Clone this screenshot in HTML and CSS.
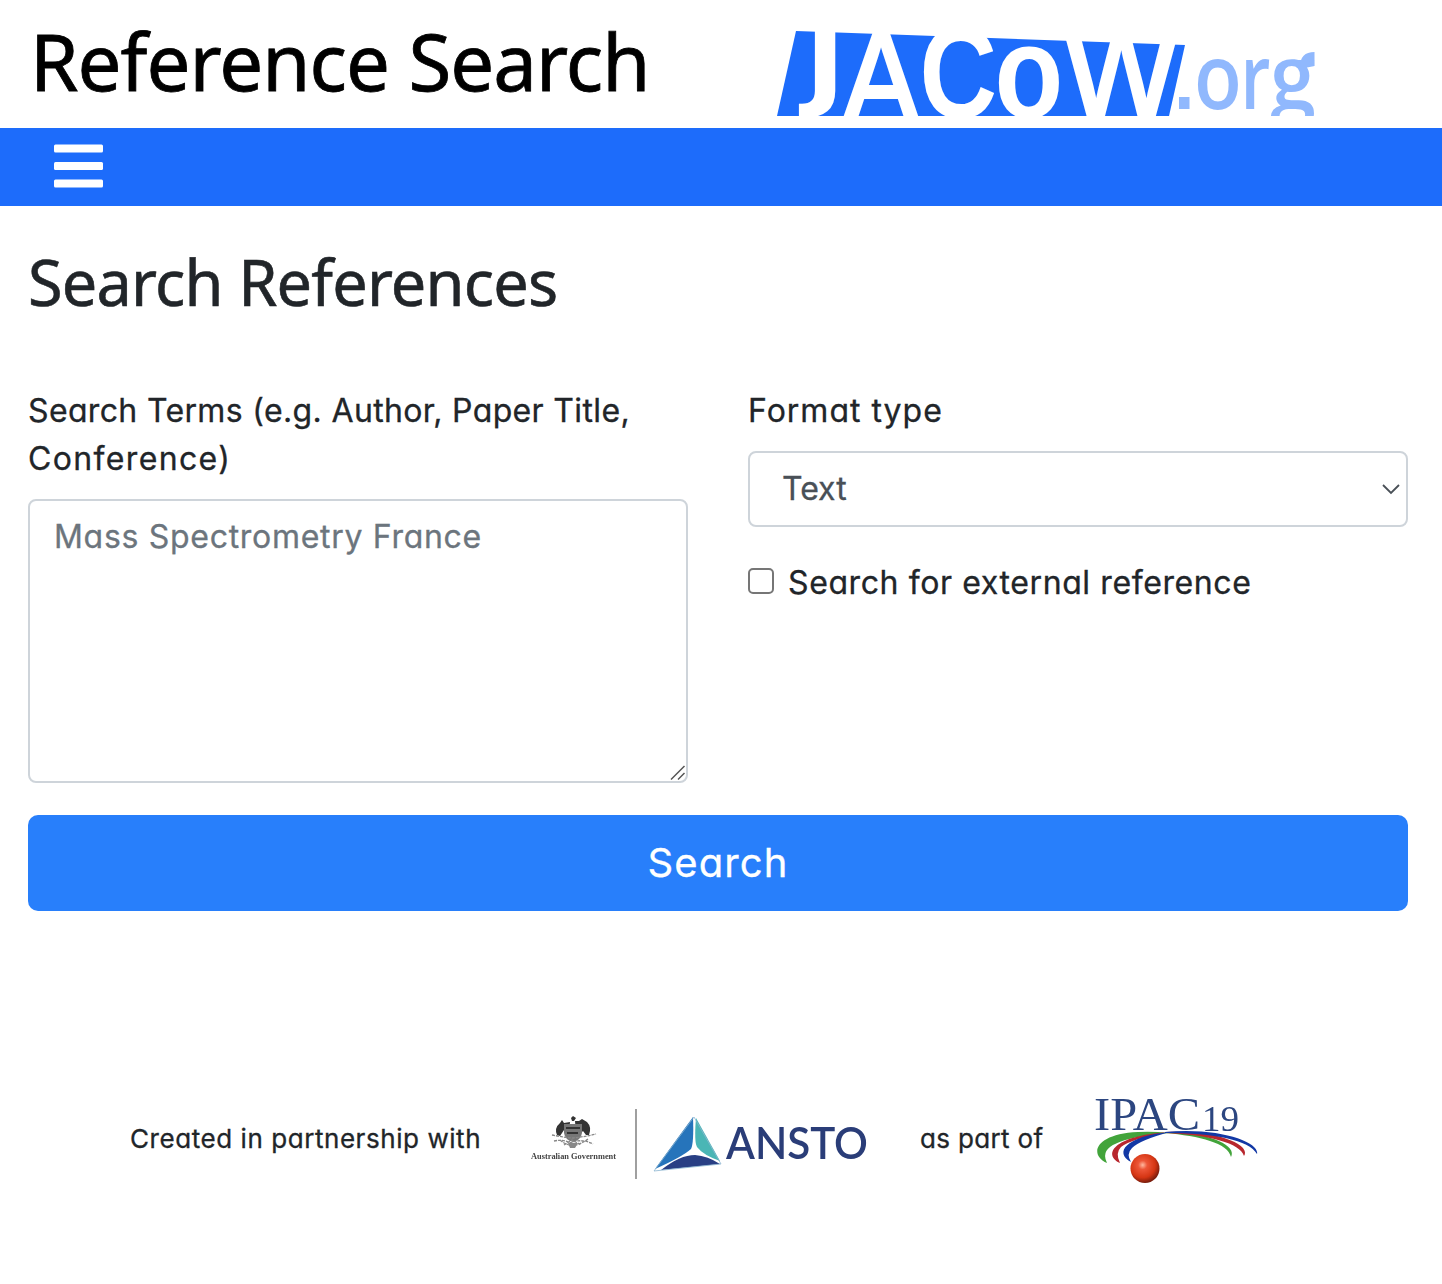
FILE: index.html
```html
<!DOCTYPE html>
<html lang="en">
<head>
<meta charset="utf-8">
<title>Reference Search</title>
<link rel="stylesheet" href="styles.css">
</head>
<body>
<header class="masthead">
  <h1 class="site-title">Reference Search</h1>
  <svg class="jacow" width="545" height="90" viewBox="775 26 545 90" role="img" aria-label="JACoW.org">
    <path fill="#1d6cfb" d="M796 31L1185 45L1169 116H777Z"/>
    <g class="jacow-name" fill="#fff">
      <text class="jacow-j" transform="translate(805 98) scale(1.08 1)">J</text>
      <text class="jacow-thin" transform="translate(842.500 124) scale(.88 1.040)">A</text>
      <text transform="translate(919.500 118) scale(.82 1)">C</text>
      <text transform="translate(994.500 118) scale(.86 1)">o</text>
      <text class="jacow-thin" transform="translate(1064 118) scale(.925 1)">W</text>
    </g>
    <g class="jacow-org" fill="#90b8fd">
      <rect x="1179" y="97" width="10.500" height="12"/>
      <text transform="translate(1194 109) scale(.87 1)">o</text>
      <text transform="translate(1240.500 109) scale(.77 1)">r</text>
      <text transform="translate(1270 109) scale(.92 1)">g</text>
    </g>
    <path fill="none" stroke="#90b8fd" stroke-width="8" d="M1304 67Q1304 56 1314.500 56"/>
  </svg>
</header>
<nav class="navbar">
  <svg width="50" height="44" viewBox="0 0 50 44" fill="#fff" aria-label="Menu"><rect x="0" y=".5" width="49" height="8" rx="1.500"/><rect x="0" y="18" width="49" height="8" rx="1.500"/><rect x="0" y="35.500" width="49" height="8" rx="1.500"/></svg>
</nav>
<main class="content">
  <h2 class="page-title">Search References</h2>
  <form class="search-form">
    <div class="columns">
      <div class="field">
        <label class="label" for="terms"><span class="terms-a">Search Terms (e.g. Author, Paper Title,</span><br><span class="terms-b">Conference)</span></label>
        <div class="control">
          <textarea class="terms" id="terms" placeholder="Mass Spectrometry France"></textarea>
          <svg class="grip" width="16" height="16" viewBox="0 0 16 16" fill="none" stroke="#555" stroke-width="1.500"><path d="M1 14.500L14.500 1M8 14.500L14.500 8"/></svg>
        </div>
      </div>
      <div class="field">
        <label class="label format-label" for="format">Format type</label>
        <div class="control">
          <select class="format" id="format"><option>Text</option></select>
          <svg class="chevron" width="18" height="11" viewBox="0 0 18 11" fill="none" stroke="#495057" stroke-width="1.800"><path d="M1 1L9 9L17 1"/></svg>
        </div>
        <label class="check"><input class="checkbox" type="checkbox"><span>Search for external reference</span></label>
      </div>
    </div>
    <button class="submit" type="button">Search</button>
  </form>
</main>
<footer class="footer">
  <span class="partner-text">Created in partnership with</span>
  <svg class="ansto" width="350" height="90" viewBox="525 1096 350 90" role="img" aria-label="Australian Government ANSTO">
    <g class="soft">
      <path fill="#333" d="M557 1135q-3-7 3-12l2-3 2 3 6-1-1 10-3 3-2-5-4 6zM589 1135q3-8-2-13l-5-3-3 2-4 0 1 13 4 0 3-3 3 4z"/>
      <path fill="#777" d="M564 1124h18v9q-1 7-9 9q-8-2-9-9z"/>
      <path fill="#333" d="M571 1118l2-2 3 2-2 3h-2zM566 1127h14v2h-14zM567 1132h11v2h-11z"/>
      <path fill="none" stroke="#888" stroke-width="1.300" stroke-dasharray="3 1" d="M552 1135q10 2 20 3q12-1 24-4M554 1141q9-2 17 2q10-5 22 1M560 1140q12 11 28-1M564 1145l8-5 9 5"/>
      <path fill="#888" d="M568 1143h10l-3 5h-5z"/>
      <text class="gov" x="531" y="1158.500" textLength="85" lengthAdjust="spacingAndGlyphs">Australian Government</text>
      <path stroke="#888" stroke-width="1.600" d="M636 1109V1179"/>
      <path fill="#2674bb" d="M693 1117L655 1169Q682 1157 691 1149Q694 1143 693 1117Z"/>
      <path fill="#4ab6b5" d="M696 1118L720 1161Q703 1155 697 1147Q694 1142 696 1118Z"/>
      <path fill="#293f84" d="M661 1170Q680 1155 695 1155Q708 1156 720 1164Z"/>
      <path fill="none" stroke="#8bb5d0" stroke-width=".8" d="M694 1117L654 1171L721 1164Z"/>
      <text class="ansto-name" x="726" y="1159" textLength="142" lengthAdjust="spacingAndGlyphs">ANSTO</text>
    </g>
  </svg>
  <span class="part-text">as part of</span>
  <svg class="ipac" width="175" height="95" viewBox="1090 1093 175 95" role="img" aria-label="IPAC19">
    <defs><radialGradient id="ball" cx=".42" cy=".38" r=".62"><stop offset="0" stop-color="#ffb9a0"/><stop offset=".25" stop-color="#ed5638"/><stop offset=".7" stop-color="#d53513"/><stop offset="1" stop-color="#791c0c"/></radialGradient></defs>
    <g class="soft">
      <text class="ipac-name" x="1094" y="1130" textLength="106" lengthAdjust="spacingAndGlyphs">IPAC</text>
      <text class="ipac-year" x="1202" y="1131" textLength="37" lengthAdjust="spacingAndGlyphs">19</text>
      <path fill="#42a43b" d="M1107 1163C1089 1155 1094 1134 1138 1132Q1152 1131 1169 1133Q1123 1137 1110 1147Q1102 1153 1107 1163Z"/>
      <path fill="#b8272e" d="M1120 1163C1103 1155 1112 1136 1168 1132Q1131 1139 1121 1147Q1115 1153 1120 1163Z"/>
      <path fill="#1238a5" d="M1131 1162C1114 1153 1125 1136 1170 1132Q1140 1140 1132 1148Q1126 1154 1131 1162Z"/>
      <path fill="#42a43b" d="M1165 1133C1208 1131 1238 1146 1231 1157C1228 1143 1200 1136 1165 1133Z"/>
      <path fill="#b8272e" d="M1165 1132C1217 1129 1252 1145 1244 1156C1240 1143 1210 1135 1165 1133Z"/>
      <path fill="#1238a5" d="M1165 1132C1222 1127 1260 1143 1257 1154C1249 1140 1215 1133 1165 1133Z"/>
      <circle cx="1145" cy="1168.500" r="14.500" fill="url(#ball)"/>
    </g>
  </svg>
</footer>
</body>
</html>
```
FILE: styles.css
```css
* { box-sizing: border-box; }
body { margin: 0; background: #fff; color: #212529; font-family: Inter, "Liberation Sans", sans-serif; font-size: 32px; font-weight: 400; line-height: 48px; font-feature-settings: "cv11"; -webkit-text-stroke: .3px; }
svg { -webkit-text-stroke: 0; }
.masthead { height: 128px; padding-left: 30px; display: flex; align-items: flex-start; }
.site-title, .page-title { margin: 0; font-family: "Noto Sans", sans-serif; font-weight: 400; white-space: nowrap; }
.site-title { width: 745px; color: #000; font-size: 78px; letter-spacing: -.95px; line-height: 96px; padding-top: 13px; -webkit-text-stroke: .8px; }
.jacow { margin-top: 26px; }
.jacow-name { font: bold 131px "Liberation Sans", sans-serif; }
.jacow-j { font: bold 100px "DejaVu Sans", sans-serif; }
.jacow-thin { font-weight: 400; stroke: #fff; stroke-width: 4px; }
.jacow-org { font: 600 90px "Open Sans", sans-serif; }
.navbar { height: 78px; padding: 16px 54px; background: #1d6cfb; }
.navbar svg { display: block; }
.content { padding: 34px 34px 0 28px; }
.page-title { font-size: 63px; line-height: 84px; letter-spacing: -.8px; -webkit-text-stroke: .6px; }
.search-form { margin-top: 63px; }
.columns { display: grid; grid-template-columns: 1fr 1fr; gap: 60px; }
.label { display: block; margin-bottom: 16px; white-space: nowrap; }
.terms-a { letter-spacing: .35px; }
.terms-b { letter-spacing: 1.35px; }
.format-label { letter-spacing: 1px; }
.control { position: relative; }
.terms, .format { display: block; width: 100%; border: 2px solid #ced4da; border-radius: 8px; background: #fff; font: inherit; color: #495057; }
.terms { height: 284px; padding: 12px 24px; resize: none; letter-spacing: .7px; }
.terms::placeholder { color: #6c757d; opacity: 1; }
.grip { position: absolute; right: 2px; bottom: 2px; }
.format { height: 76px; padding: 0 32px; appearance: none; }
.chevron { position: absolute; right: 8px; top: 33px; }
.check { display: flex; align-items: center; gap: 14px; margin-top: 32px; white-space: nowrap; letter-spacing: .6px; }
.checkbox { appearance: none; width: 26px; height: 26px; margin: 0 0 4px; border: 2px solid #767676; border-radius: 5px; background: #fff; }
.submit { display: block; width: 100%; height: 96px; margin-top: 32px; border: 0; border-radius: 10px; background: #287ffb; color: #fff; font: inherit; font-size: 40px; letter-spacing: 1.1px; }
.footer { display: flex; align-items: center; height: 95px; margin-top: 182px; padding-left: 130px; font-size: 26px; white-space: nowrap; }
.partner-text { width: 395px; margin-bottom: 4px; letter-spacing: .56px; }
.ansto { width: 350px; }
.part-text { width: 125px; margin: 0 0 4px 45px; letter-spacing: .35px; }
.ipac { margin-left: 45px; }
.soft { filter: blur(.45px); }
.gov { font: bold 9px "Liberation Serif", serif; fill: #444; }
.ansto-name { font: 600 44px Lato, sans-serif; fill: #2a3d78; }
.ipac-name { font: 47px "Liberation Serif", serif; fill: #2c4680; }
.ipac-year { font: 36px "Liberation Serif", serif; fill: #2c4680; }
```
